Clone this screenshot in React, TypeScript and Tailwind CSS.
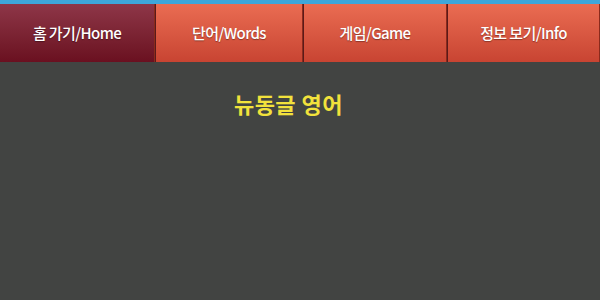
import React from 'react';

const tabs = [
  { label: '홈 가기/Home', w: 'w-[155px]', active: true },
  { label: '단어/Words', w: 'w-[147px]', active: false },
  { label: '게임/Game', w: 'w-[143px]', active: false },
  { label: '정보 보기/Info', w: 'flex-1', active: false },
];

export default function App() {
  return (
    <div className="w-[600px] h-[300px] bg-[#424442] flex flex-col" style={{ fontFamily: '"Noto Sans CJK KR", "Noto Sans", sans-serif' }}>
      {/* Top accent strip */}
      <div className="h-[4px] bg-[#3ea6da]" />

      {/* Tab bar */}
      <div className="flex h-[58px] bg-[#5a1a1a] gap-[1px]">
        {tabs.map(tab => (
          <div
            key={tab.label}
            className={`${tab.w} flex items-center justify-center text-white text-[15px] font-medium tracking-[-0.6px] border-r border-[#8a2a1c] ${
              tab.active
                ? 'bg-gradient-to-b from-[#8e3648] to-[#6a1020]'
                : 'bg-gradient-to-b from-[#ea6c52] to-[#c84432]'
            }`}
            style={{ textShadow: '0 1px 1px rgba(0,0,0,0.35)' }}
          >
            {tab.label}
          </div>
        ))}
      </div>

      {/* Content */}
      <div className="flex justify-center pr-[23px] pt-[26px]">
        <h1 className="text-[22px] leading-[30px] font-bold text-[#f2e23c] tracking-[0.5px]">뉴동글 영어</h1>
      </div>
    </div>
  );
}
